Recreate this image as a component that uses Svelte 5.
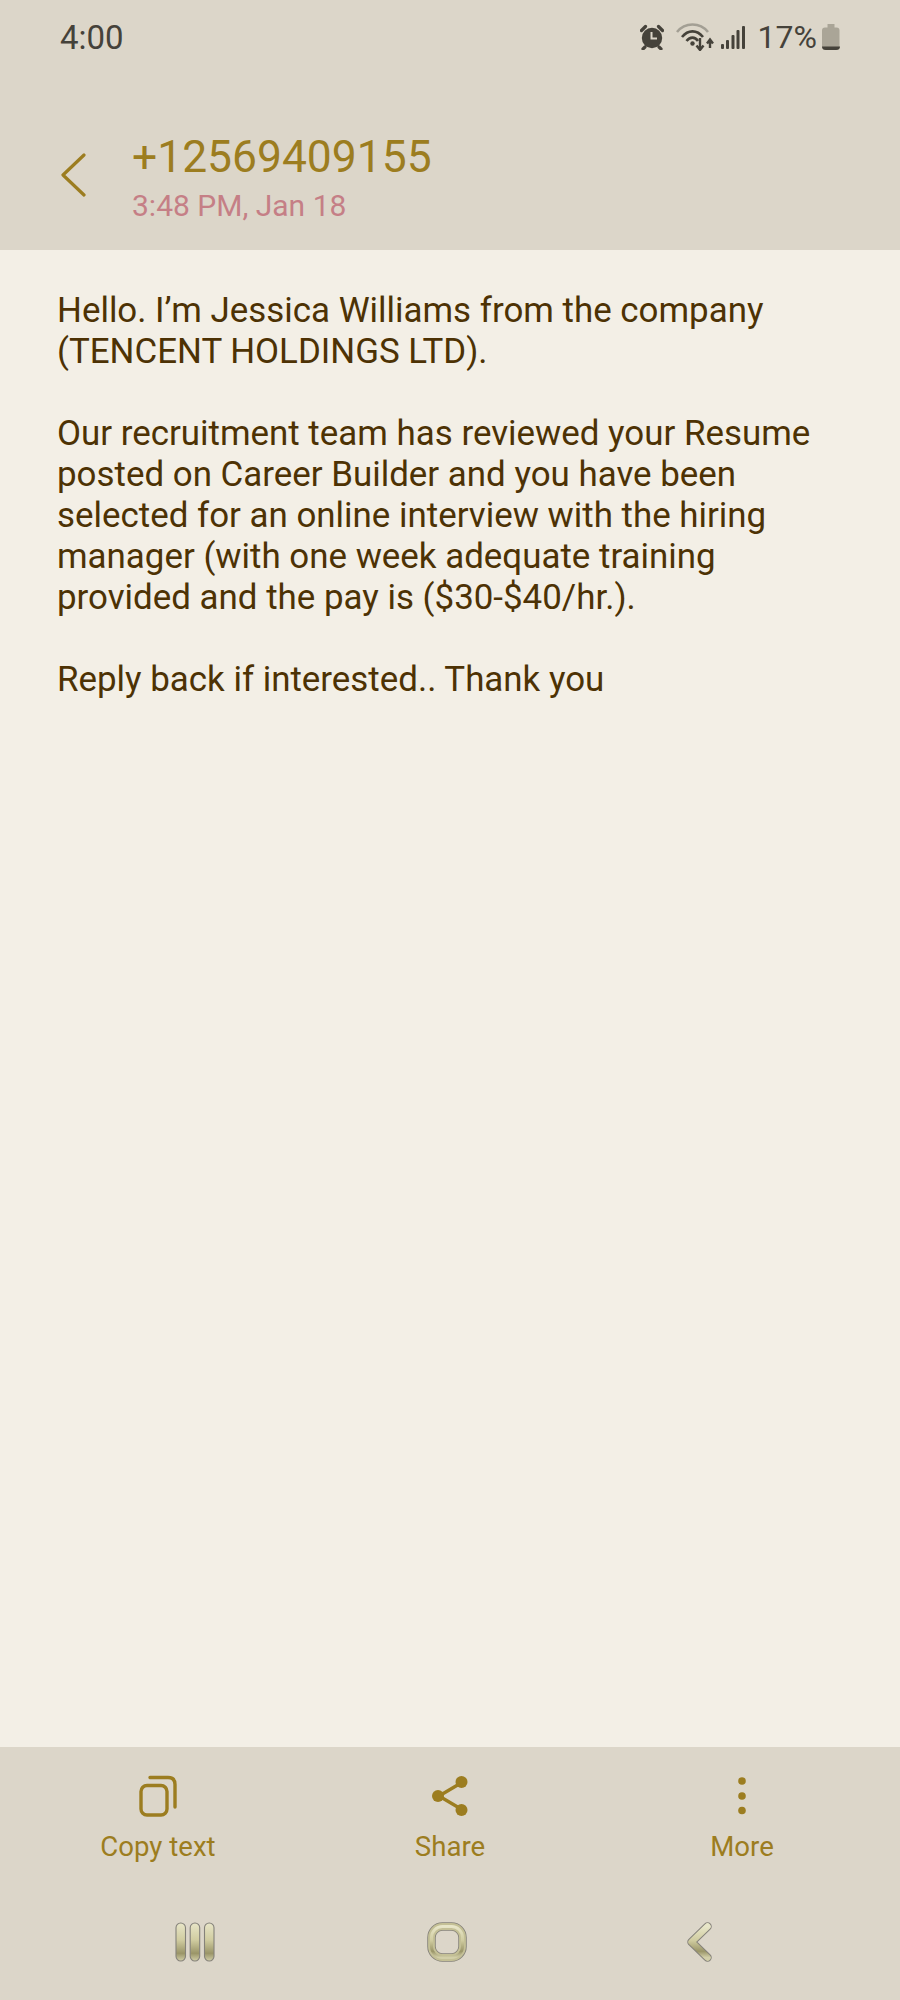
<script>
  const paragraphs = [
    ["Hello. I’m Jessica Williams from the company", "(TENCENT HOLDINGS LTD)."],
    [
      "Our recruitment team has reviewed your Resume",
      "posted on Career Builder and you have been",
      "selected for an online interview with the hiring",
      "manager (with one week adequate training",
      "provided and the pay is ($30-$40/hr.)."
    ],
    ["Reply back if interested.. Thank you"]
  ];
</script>

<div class="page">
  <header class="top">
    <div class="status">
      <span class="clock">4:00</span>
      <div class="status-right">
        <svg class="alarm" width="24" height="26" viewBox="0 0 24 26">
          <circle cx="12" cy="14" r="10.2" fill="#45423a" />
          <path d="M1.5 6.5 5.5 2.500M22.5 6.5 18.5 2.500M5 23l-2 2M19 23l2 2" stroke="#45423a" stroke-width="3.2" stroke-linecap="round" />
          <path d="M11.5 8v6.500h5.500" fill="none" stroke="#dcd6c9" stroke-width="2" />
        </svg>
        <svg class="wifi" width="38" height="28" viewBox="0 0 38 28">
          <path d="M1 9C9 -1 24 -1 32 9" fill="none" stroke="#a39f94" stroke-width="2.6" />
          <path d="M6 14C12 6.500 21 6.500 27 14M10.500 18C14 13.500 19 13.500 22 18" fill="none" stroke="#45423a" stroke-width="2.600" />
          <circle cx="16.500" cy="20.500" r="2.200" fill="#45423a" />
          <path d="M24 15v11M20.500 22.500 24 27l3.500-4.500" fill="none" stroke="#45423a" stroke-width="2.400" />
          <path d="M34 25V17M31 20.500 34 16.500l3 4" fill="none" stroke="#45423a" stroke-width="2.400" />
        </svg>
        <svg class="signal" width="24" height="25" viewBox="0 0 24 25">
          <g fill="#45423a">
            <rect x="0" y="19" width="3" height="5" rx="1" />
            <rect x="5" y="15" width="3" height="9" rx="1" />
            <rect x="10.500" y="10" width="3" height="14" rx="1" />
            <rect x="15.500" y="5" width="3" height="19" rx="1" />
            <rect x="21" y="1" width="3" height="23" rx="1" />
          </g>
        </svg>
        <span class="battery-text">17%</span>
        <svg class="battery" width="18" height="26" viewBox="0 0 18 26">
          <path d="M5.500 0h7v3.500h2q3 0 3 3V22q0 4-4 4H4q-4 0-4-4V6.500q0-3 3-3h2.500z" fill="#aaa597" />
          <path d="M0 22.500h18q0 3.500-4 3.500H4q-4 0-4-3.500z" fill="#45423a" />
        </svg>
      </div>
    </div>
    <div class="titlebar">
      <svg class="back" width="26" height="44" viewBox="0 0 26 44">
        <path d="M24 2 3 22l21 20" fill="none" stroke="#9c7d20" stroke-width="3.200" stroke-linecap="round" stroke-linejoin="round" />
      </svg>
      <div class="title-text">
        <div class="number">+12569409155</div>
        <div class="date">3:48 PM, Jan 18</div>
      </div>
    </div>
  </header>

  <main class="message">
    {#each paragraphs as para}
      <p>
        {#each para as line}
          <span class="line">{line}</span>
        {/each}
      </p>
    {/each}
  </main>

  <footer class="bottom">
    <div class="actions">
      <div class="action">
        <svg width="38" height="42" viewBox="0 0 38 42">
          <rect x="2" y="10.500" width="26" height="29.500" rx="6" fill="none" stroke="#9c7d20" stroke-width="3.400" />
          <path d="M11 2.500h18q7 0 7 7V32" fill="none" stroke="#9c7d20" stroke-width="3.400" stroke-linecap="round" />
        </svg>
        <span>Copy text</span>
      </div>
      <div class="action">
        <svg width="38" height="42" viewBox="0 0 38 42">
          <path d="M30 8 8 21l22 13" fill="none" stroke="#9c7d20" stroke-width="3.400" />
          <g fill="#9c7d20">
            <circle cx="30.500" cy="7" r="6" />
            <circle cx="7" cy="21" r="6" />
            <circle cx="30.500" cy="35" r="6" />
          </g>
        </svg>
        <span>Share</span>
      </div>
      <div class="action">
        <svg width="38" height="42" viewBox="0 0 38 42">
          <g fill="#9c7d20">
            <circle cx="19" cy="6" r="3.800" />
            <circle cx="19" cy="21" r="3.800" />
            <circle cx="19" cy="35.500" r="3.800" />
          </g>
        </svg>
        <span>More</span>
      </div>
    </div>
    <nav class="navbar">
      <svg width="40" height="40" viewBox="0 0 40 40">
        <defs>
          <linearGradient id="metal" x1="0" y1="0" x2="0" y2="1">
            <stop offset="0" stop-color="#e8e6c8" />
            <stop offset="0.45" stop-color="#d0cca0" />
            <stop offset="0.8" stop-color="#9a9568" />
            <stop offset="1" stop-color="#d2cfa8" />
          </linearGradient>
        </defs>
        <g fill="url(#metal)" stroke="#85827a" stroke-width="1.100">
          <rect x="1" y="1" width="9.500" height="38" rx="4.700" />
          <rect x="15.200" y="1" width="9.500" height="38" rx="4.700" />
          <rect x="29.500" y="1" width="9.500" height="38" rx="4.700" />
        </g>
      </svg>
      <svg width="40" height="40" viewBox="0 0 40 40">
        <rect x="4.500" y="4.500" width="31" height="31" rx="11" fill="none" stroke="#85827a" stroke-width="8.500" />
        <rect x="4.500" y="4.500" width="31" height="31" rx="11" fill="none" stroke="#c4c096" stroke-width="6.800" />
        <rect x="4.500" y="4.500" width="31" height="31" rx="11" fill="none" stroke="url(#metal)" stroke-width="3" />
      </svg>
      <svg width="26" height="40" viewBox="0 0 26 40">
        <path d="M21.500 4.500 5.500 20l16 15.500" fill="none" stroke="#85827a" stroke-width="8.500" stroke-linecap="round" stroke-linejoin="round" />
        <path d="M21.500 4.500 5.500 20l16 15.500" fill="none" stroke="url(#metal)" stroke-width="6.500" stroke-linecap="round" stroke-linejoin="round" />
      </svg>
    </nav>
  </footer>
</div>

<style>
  :global(body) {
    margin: 0;
  }

  .page {
    width: 900px;
    height: 2000px;
    display: flex;
    flex-direction: column;
    font-family: Roboto, sans-serif;
    background: #f3efe6;
  }

  .top {
    background: #dcd6c9;
    height: 250px;
    flex: none;
  }

  .status {
    height: 74px;
    display: flex;
    align-items: center;
    justify-content: space-between;
    padding: 0 60px;
  }

  .clock {
    font-size: 33px;
    color: #45423a;
  }

  .status-right {
    display: flex;
    align-items: center;
  }

  .wifi {
    margin-left: 12px;
  }

  .signal {
    margin-left: 7px;
  }

  .battery-text {
    margin-left: 13px;
    font-size: 32px;
    color: #45423a;
  }

  .battery {
    margin-left: 5px;
  }

  .titlebar {
    display: flex;
    align-items: flex-start;
    padding: 57px 0 0 60px;
  }

  .back {
    flex: none;
    margin-top: 22px;
  }

  .title-text {
    margin-left: 46px;
  }

  .number {
    font-size: 44.400px;
    line-height: 52px;
    color: #9c7d20;
  }

  .date {
    margin-top: 4px;
    font-size: 30px;
    line-height: 38px;
    color: #c57f86;
  }

  .message {
    flex: 1;
    padding: 40px 57px 0;
    color: #4d3204;
    font-size: 34.900px;
    line-height: 41px;
  }

  .message p {
    margin: 0 0 41px;
  }

  .line {
    display: block;
    white-space: nowrap;
  }

  .bottom {
    flex: none;
    height: 253px;
    background: #dcd6c9;
  }

  .actions {
    display: grid;
    grid-template-columns: repeat(3, 1fr);
    padding: 28px 12px 0;
  }

  .action {
    display: flex;
    flex-direction: column;
    align-items: center;
    color: #9c7d20;
    font-size: 27.600px;
  }

  .action span {
    margin-top: 12px;
    line-height: 36px;
  }

  .navbar {
    display: grid;
    grid-template-columns: repeat(3, 1fr);
    justify-items: center;
    padding: 57px 75px 0 69px;
  }
</style>
